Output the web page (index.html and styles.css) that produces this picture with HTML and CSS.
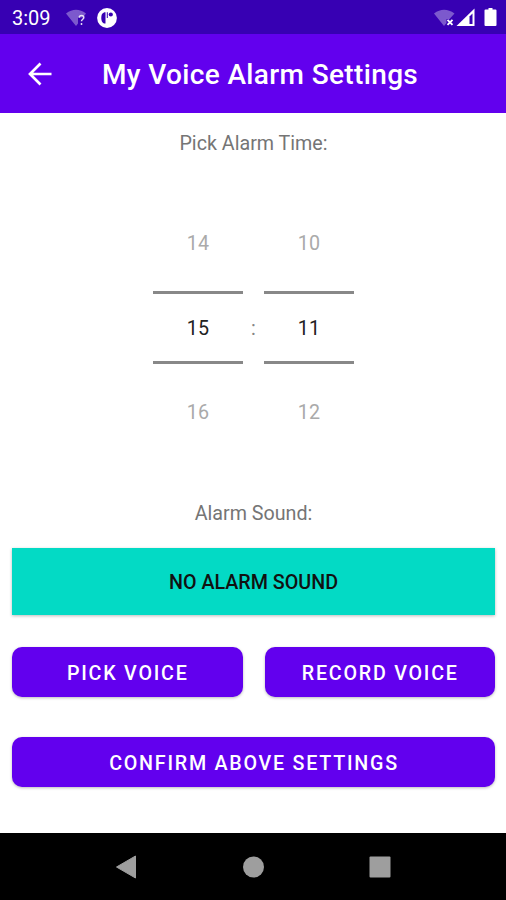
FILE: index.html
```html
<!DOCTYPE html>
<html lang="en">
<head>
<meta charset="utf-8">
<title>My Voice Alarm Settings</title>
<link rel="stylesheet" href="styles.css">
</head>
<body>
<div class="screen">
  <div class="status">
    <span class="clock">3:09</span>
    <svg class="wifi-unknown" width="22" height="18" viewBox="0 0 22 18"><path d="M0 4.500Q10 -3 20 4.500L17 8.500h-5v6L10 17Z" fill="#fff" fill-opacity=".35"/><path d="M13.200 8.600q.2-2 2.300-2 2.300 0 2.300 2c0 1.700-2.300 1.600-2.300 3.600M15.500 14v2" fill="none" stroke="#fff" stroke-opacity=".85" stroke-width="1.500"/></svg>
    <svg class="app-dot" width="20" height="20" viewBox="0 0 20 20"><circle cx="10" cy="10" r="9.900" fill="#fff"/><path d="M8.500 4.300v11.200C5.500 15.500 4.300 13.500 4.300 10S5.500 4.300 8.500 4.300Z" fill="#3700b3"/><path d="M9.800 4.300h1v5.700h-1z" fill="#3700b3"/><circle cx="13.800" cy="6.500" r="2.100" fill="#3700b3"/></svg>
    <svg class="signals" width="64" height="22" viewBox="0 0 64 22"><path d="M0 6.500Q10 -1 20.500 6.500L15.500 12h-3v4L10 19Z" fill="#fff" fill-opacity=".35"/><path d="M13.500 12.900l5 5m0-5l-5 5" stroke="#fff" stroke-width="1.900"/><path d="M22.500 19L40.500 1.500V19Z" fill="#fff"/><path d="M35.500 9.500L38.500 6.500v10.500h-3z" fill="#3700b3"/><path d="M51.500 2.500h3V1h4v1.500h3q1 0 1 1V18q0 1-1 1H51.500q-1 0-1-1V3.500q0-1 1-1Z" fill="#fff"/></svg>
  </div>
  <header class="appbar">
    <svg class="back" width="24" height="24" viewBox="0 0 24 24"><path d="M23.500 12H2M12.500 1.500L2 12l10.500 10.500" fill="none" stroke="#fff" stroke-width="2.700"/></svg>
    <h1>My Voice Alarm Settings</h1>
  </header>
  <main>
    <p class="label">Pick Alarm Time:</p>
    <div class="picker">
      <div class="wheel"><span class="dim">14</span><span class="current">15</span><span class="dim">16</span></div>
      <span class="colon">:</span>
      <div class="wheel"><span class="dim">10</span><span class="current">11</span><span class="dim">12</span></div>
    </div>
    <p class="label">Alarm Sound:</p>
    <div class="sound">NO ALARM SOUND</div>
    <div class="actions">
      <button>PICK VOICE</button>
      <button>RECORD VOICE</button>
    </div>
    <button class="confirm">CONFIRM ABOVE SETTINGS</button>
  </main>
  <nav>
    <svg width="22" height="24" viewBox="0 0 22 24"><path d="M1.500 12L20.500 1v22Z" fill="#9e9e9e" stroke="#9e9e9e" stroke-linejoin="round"/></svg>
    <svg width="22" height="24" viewBox="0 0 22 24"><circle cx="11.500" cy="12" r="10.500" fill="#9e9e9e"/></svg>
    <svg width="22" height="24" viewBox="0 0 22 24"><rect x=".5" y="1.500" width="21" height="21" rx="1" fill="#9e9e9e"/></svg>
  </nav>
</div>
</body>
</html>
```
FILE: styles.css
```css
* { box-sizing: border-box; }
body { margin: 0; font-family: Roboto, sans-serif; }
.screen { width: 506px; height: 900px; display: flex; flex-direction: column; background: #fff; }
.status { height: 34px; background: #3700b3; display: flex; align-items: center; padding: 0 8px 0 12px; color: #fff; }
.clock { width: 54px; font-size: 20px; line-height: 34px; padding-top: 2px; }
.wifi-unknown { margin-top: 1px; }
.app-dot { margin-left: 8.500px; margin-top: 1px; }
.signals { margin-left: auto; margin-top: 1px; }
.appbar { height: 79px; background: #6200ee; color: #fff; display: flex; align-items: center; padding-left: 28px; }
h1 { margin: 3px 0 0 50px; font-size: 28px; line-height: 34px; font-weight: 500; letter-spacing: .360px; white-space: nowrap; }
main { flex: 1; padding: 19px 11px 0 12px; }
.label { margin: 0; text-align: center; font-size: 19.700px; line-height: 24px; color: #757575; }
.picker { height: 254px; margin: 46px 0; display: flex; justify-content: center; align-items: center; }
.wheel { width: 90px; padding-bottom: 4px; text-align: center; font-size: 19.700px; color: #222; }
.wheel span { display: block; letter-spacing: .2px; }
.wheel .dim { height: 60px; line-height: 26px; color: #aaa; }
.wheel .dim:last-child { padding-top: 36px; }
.wheel .current { height: 73px; border: solid #888; border-width: 3px 0; line-height: 69px; }
.colon { width: 21px; padding-bottom: 2px; text-align: center; font-size: 19.700px; color: #858585; }
.sound { height: 67px; margin-top: 22px; background: #03dac5; color: #111; text-align: center; font-size: 19.700px; font-weight: 500; line-height: 70px; box-shadow: 0 1px 3px #0004; }
.actions { display: grid; grid-template-columns: 1fr 1fr; gap: 22px; margin: 32px 0 40px; }
button { height: 50px; border: 0; padding: 2px 0 0 1px; border-radius: 10px; background: #6200ee; color: #fff; font: 500 19.700px Roboto, sans-serif; letter-spacing: 1.750px; box-shadow: 0 1px 3px #0004; }
.confirm { display: block; width: 100%; }
nav { height: 67px; background: #000; display: flex; justify-content: center; align-items: center; gap: 105px; }
```
